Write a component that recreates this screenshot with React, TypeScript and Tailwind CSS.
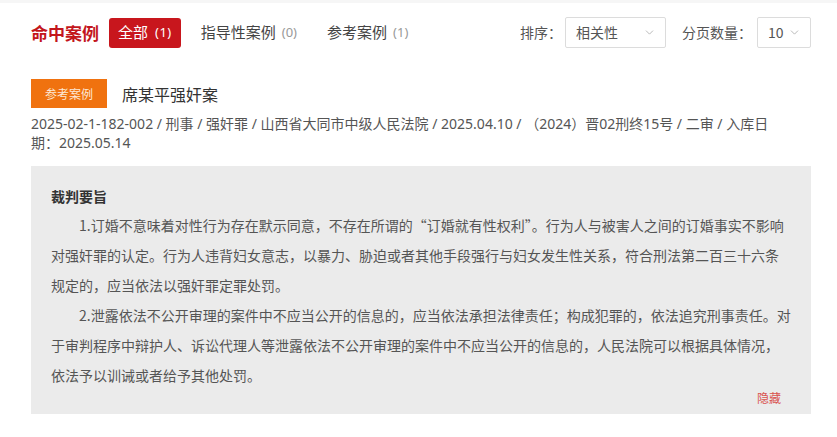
import React from "react";
import { ChevronDown } from "lucide-react";

const font = "font-['Noto_Sans','Noto_Sans_CJK_SC',sans-serif]";
const cjk = "font-['Noto_Sans_CJK_SC',sans-serif]";

function Select({ value, width }: { value: string; width: string }) {
  return (
    <div
      className={`${width} h-[31px] border border-[#dcdcdc] rounded-[2px] bg-white flex items-center justify-between pl-[10px] pr-[9px] text-[14px] text-[#555]`}
    >
      <span>{value}</span>
      <ChevronDown className="w-[13px] h-[13px] text-[#aaa]" strokeWidth={1.5} />
    </div>
  );
}

export default function App() {
  return (
    <div className={`w-[837px] h-[437px] bg-white border-t-[3px] border-[#f6f6f6] pl-[31px] pr-[26px] pt-[14px] ${font}`}>
      {/* header */}
      <div className="flex items-center justify-between h-[31px]">
        <div className="flex items-center gap-[10px]">
          <h1 className={`text-[17px] font-bold text-[#c3161c] ${cjk}`}>命中案例</h1>
          <button className="h-[30px] px-[9px] rounded-[3px] bg-[#c8161d] text-white flex items-center gap-[7px]">
            <span className={`text-[15px] ${cjk}`}>全部</span>
            <span className="text-[13px] tracking-[0.5px]">(1)</span>
          </button>
          <div className="px-[10px] text-[#444] flex items-center gap-[6px]">
            <span className={`text-[15px] ${cjk}`}>指导性案例</span>
            <span className="text-[13px] text-[#999]">(0)</span>
          </div>
          <div className="px-[10px] text-[#444] flex items-center gap-[6px]">
            <span className={`text-[15px] ${cjk}`}>参考案例</span>
            <span className="text-[13px] text-[#999]">(1)</span>
          </div>
        </div>
        <div className={`flex items-center text-[14px] text-[#555] ${cjk}`}>
          <span className="mr-[3px]">排序：</span>
          <Select value="相关性" width="w-[101px]" />
          <span className="ml-[16px] mr-[5px]">分页数量：</span>
          <Select value="10" width="w-[54px]" />
        </div>
      </div>

      {/* case title */}
      <div className="mt-[31px] flex items-center gap-[15px]">
        <span className={`w-[76px] h-[29px] bg-[#f0720f] text-[#fde8d6] text-[12px] flex items-center justify-center ${cjk}`}>
          参考案例
        </span>
        <span className={`text-[16px] text-[#333] ${cjk}`}>席某平强奸案</span>
      </div>

      {/* meta */}
      <p className="mt-[6px] text-[14px] leading-[19px] text-[#555]">
        2025-02-1-182-002 / 刑事 / 强奸罪 / 山西省大同市中级人民法院 / 2025.04.10 / （2024）晋02刑终15号 / 二审 / 入库日
        <br />
        期：2025.05.14
      </p>

      {/* summary box */}
      <div className={`mt-[14px] w-[780px] bg-[#ebebeb] pt-[20px] pb-[8px] px-[20px] ${cjk}`}>
        <h2 className="text-[14px] leading-[20px] font-bold text-[#333]">裁判要旨</h2>
        <div className="mt-[4px] text-[14px] leading-[30px] text-[#555]">
          <p className="indent-[28px]">
            1.订婚不意味着对性行为存在默示同意，不存在所谓的“订婚就有性权利”。行为人与被害人之间的订婚事实不影响对强奸罪的认定。行为人违背妇女意志，以暴力、胁迫或者其他手段强行与妇女发生性关系，符合刑法第二百三十六条规定的，应当依法以强奸罪定罪处罚。
          </p>
          <p className="indent-[28px]">
            2.泄露依法不公开审理的案件中不应当公开的信息的，应当依法承担法律责任；构成犯罪的，依法追究刑事责任。对于审判程序中辩护人、诉讼代理人等泄露依法不公开审理的案件中不应当公开的信息的，人民法院可以根据具体情况，依法予以训诫或者给予其他处罚。
          </p>
        </div>
        <div className="flex justify-end pr-[10px]">
          <span className="text-[12px] leading-[16px] text-[#d9534f]">隐藏</span>
        </div>
      </div>
    </div>
  );
}
